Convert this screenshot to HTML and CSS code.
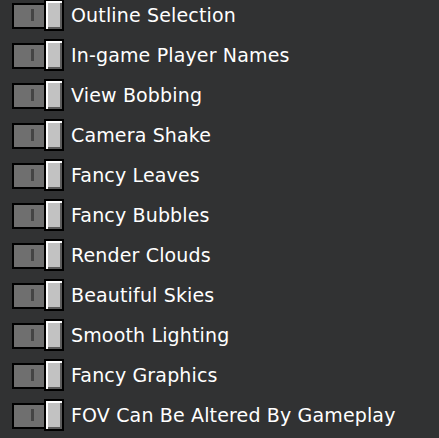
FILE: index.html
```html
<!DOCTYPE html>
<html lang="en">
<head>
  <meta charset="UTF-8">
  <title>Video Settings</title>
  <link rel="stylesheet" href="styles.css">
</head>
<body>
  <div class="options">
    <div class="option"><div class="toggle"><div class="track"><span class="notch"></span></div><div class="knob"></div></div><span class="label">Outline Selection</span></div>
    <div class="option"><div class="toggle"><div class="track"><span class="notch"></span></div><div class="knob"></div></div><span class="label">In-game Player Names</span></div>
    <div class="option"><div class="toggle"><div class="track"><span class="notch"></span></div><div class="knob"></div></div><span class="label">View Bobbing</span></div>
    <div class="option"><div class="toggle"><div class="track"><span class="notch"></span></div><div class="knob"></div></div><span class="label">Camera Shake</span></div>
    <div class="option"><div class="toggle"><div class="track"><span class="notch"></span></div><div class="knob"></div></div><span class="label">Fancy Leaves</span></div>
    <div class="option"><div class="toggle"><div class="track"><span class="notch"></span></div><div class="knob"></div></div><span class="label">Fancy Bubbles</span></div>
    <div class="option"><div class="toggle"><div class="track"><span class="notch"></span></div><div class="knob"></div></div><span class="label">Render Clouds</span></div>
    <div class="option"><div class="toggle"><div class="track"><span class="notch"></span></div><div class="knob"></div></div><span class="label">Beautiful Skies</span></div>
    <div class="option"><div class="toggle"><div class="track"><span class="notch"></span></div><div class="knob"></div></div><span class="label">Smooth Lighting</span></div>
    <div class="option"><div class="toggle"><div class="track"><span class="notch"></span></div><div class="knob"></div></div><span class="label">Fancy Graphics</span></div>
    <div class="option"><div class="toggle"><div class="track"><span class="notch"></span></div><div class="knob"></div></div><span class="label">FOV Can Be Altered By Gameplay</span></div>
  </div>
</body>
</html>
```

FILE: styles.css
```css
* {
  box-sizing: border-box;
}
body {
  margin: 0;
  padding: 0 0 0 12px;
  background: #313233;
  color: #fff;
  font-family: 'DejaVu Sans', sans-serif;
  font-size: 19px;
  overflow: hidden;
}
.options {
  display: flex;
  flex-direction: column;
  gap: 8px;
  margin-top: -1px;
}
.option {
  display: flex;
  align-items: center;
  height: 32px;
}
.toggle {
  display: flex;
  align-items: center;
  margin-right: 7px;
}
.track {
  width: 34px;
  height: 26px;
  margin-top: 2px;
  border: 2px solid #000;
  background: #6f6f6f;
  display: flex;
  align-items: center;
  padding-left: 17px;
}
.notch {
  width: 3px;
  height: 12px;
  margin-top: -2px;
  background: #444;
}
.knob {
  width: 20px;
  height: 32px;
  margin-left: -2px;
  border: 2px solid #000;
  background: #c2c2c2;
  box-shadow: inset 2px 2px 0 #fff, inset -2px -2px 0 #5c5c5c;
}
.label {
  white-space: nowrap;
  line-height: 32px;
  letter-spacing: 0.15px;
  margin-top: -1px;
}
```
